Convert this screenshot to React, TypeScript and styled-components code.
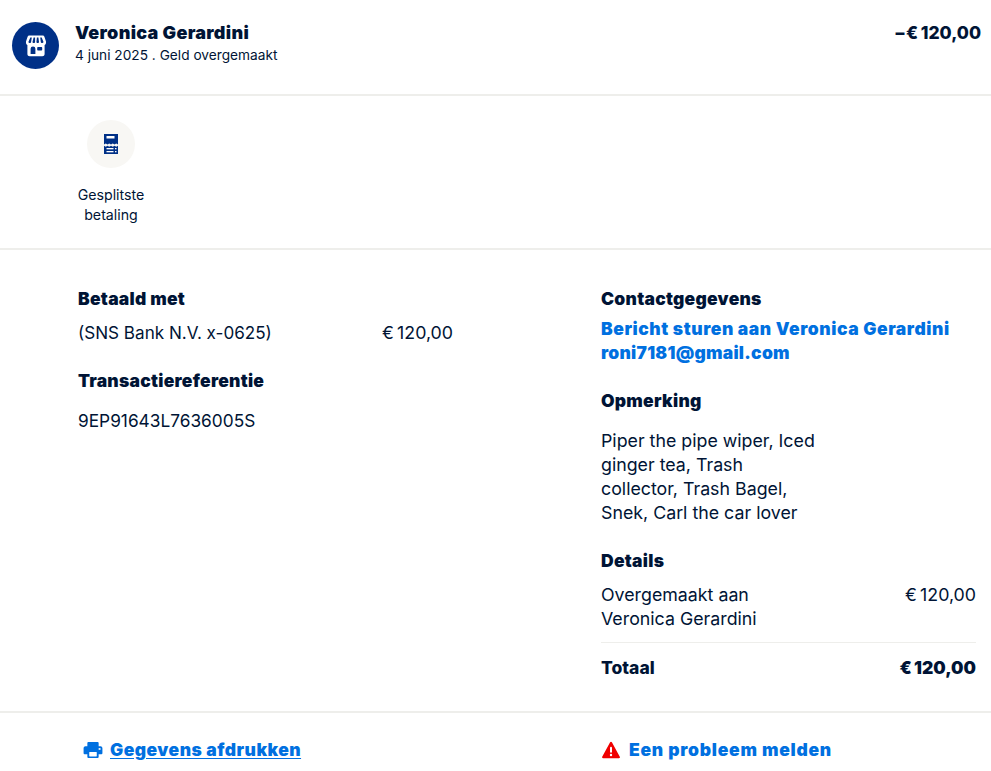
import React from "react";
import styled, { createGlobalStyle } from "styled-components";

const Global = createGlobalStyle`
  html, body { margin: 0; padding: 0; background: #fff; }
  body { font-family: Inter, "Liberation Sans", sans-serif; color: #001435; }
`;

const Page = styled.div`
  width: 991px;
  height: 771px;
  overflow: hidden;
`;

const Header = styled.header`
  height: 96px;
  box-sizing: border-box;
  padding: 21px 10px 0 12px;
  display: flex;
  align-items: flex-start;
  border-bottom: 2px solid #eeeeeb;
`;

const Avatar = styled.div`
  width: 47px;
  height: 47px;
  margin-top: 1px;
  border-radius: 50%;
  background: #003087;
  display: flex;
  align-items: center;
  justify-content: center;
  flex: none;
`;

const HeaderText = styled.div`
  margin-left: 16px;
  flex: 1;
`;

const Name = styled.div`
  font-size: 18px;
  line-height: 24px;
  font-weight: 900;
  letter-spacing: 0.3px;
`;

const Sub = styled.div`
  font-size: 13.7px;
  line-height: 18px;
  margin-top: 1px;
`;

const Amount = styled.div`
  font-size: 17.5px;
  line-height: 24px;
  font-weight: 800;
  letter-spacing: -0.75px;
`;

const Actions = styled.section`
  height: 154px;
  box-sizing: border-box;
  border-bottom: 2px solid #eeeeeb;
  padding: 24px 0 0 72px;
`;

const Action = styled.div`
  width: 78px;
  display: flex;
  flex-direction: column;
  align-items: center;
`;

const ActionCircle = styled.div`
  width: 48px;
  height: 48px;
  border-radius: 50%;
  background: #f8f7f4;
  display: flex;
  align-items: center;
  justify-content: center;
`;

const ActionLabel = styled.div`
  margin-top: 17px;
  font-size: 14.2px;
  line-height: 20px;
  text-align: center;
`;

const Main = styled.main`
  height: 463px;
  box-sizing: border-box;
  border-bottom: 2px solid #eeeeeb;
  padding: 37px 15px 0 78px;
  display: grid;
  grid-template-columns: 375px 375px;
  column-gap: 148px;
  align-content: start;
`;

const Column = styled.div`
  display: flex;
  flex-direction: column;
`;

const Heading = styled.h3<{ $top?: number }>`
  margin: ${(p) => p.$top ?? 0}px 0 0;
  font-size: 17.5px;
  line-height: 24px;
  font-weight: 900;
  letter-spacing: 0.25px;
`;

const Row = styled.div`
  display: flex;
  justify-content: space-between;
  align-items: flex-start;
`;

const Body = styled.div<{ $top?: number; $width?: number; $size?: number }>`
  margin-top: ${(p) => p.$top ?? 0}px;
  font-size: ${(p) => p.$size ?? 17.8}px;
  line-height: 24px;
  ${(p) => (p.$width ? `width: ${p.$width}px;` : "")}
`;

const ContactLink = styled.a<{ $spacing?: number }>`
  font-size: 17.5px;
  line-height: 24px;
  font-weight: 900;
  color: #0070e0;
  letter-spacing: ${(p) => p.$spacing ?? 0.25}px;
  text-decoration: none;
  display: block;
`;

const ContactLinks = styled.div`
  margin-top: 6px;
`;

const TotalRow = styled.div`
  margin-top: 11px;
  padding-top: 13px;
  border-top: 1px solid #eeeeeb;
  display: flex;
  justify-content: space-between;
  font-size: 17.5px;
  line-height: 24px;
  font-weight: 800;
`;

const TotalValue = styled.span`
  font-weight: 900;
  letter-spacing: -0.2px;
`;

const Footer = styled.footer`
  padding: 25px 15px 0 83px;
  display: grid;
  grid-template-columns: 370px 375px;
  column-gap: 148px;
`;

const FootLink = styled.a`
  display: inline-flex;
  align-items: center;
  gap: 7px;
  font-size: 17.5px;
  line-height: 24px;
  font-weight: 900;
  color: #0070e0;
  letter-spacing: 0.47px;
`;

const Underlined = styled.span`
  text-decoration: underline;
  text-underline-offset: 2px;
`;

const ReportLink = styled(FootLink)`
  gap: 9px;
  margin-left: 1px;
  letter-spacing: 0.75px;
`;

const StoreIcon = () => (
  <svg width="24" height="24" viewBox="0 0 24 24">
    <path fill="#fff" d="M5.500 1.500h13c.9 0 1.600.5 1.900 1.300L22 7.500v1.200c0 1-.6 1.900-1.400 2.300V20c0 1.300-1 2.300-2.300 2.300H5.700c-1.300 0-2.300-1-2.300-2.300v-9c-.8-.4-1.400-1.300-1.400-2.300V7.500l1.600-4.700c.3-.8 1-1.300 1.900-1.300Z" />
    <path fill="#003087" d="M6.300 3.500h1.500L7.100 8c-.1.800-.6 1.100-1.200 1.100-.7 0-1.300-.4-1.500-1ZM9.600 3.500h1.500v4.500c0 .7-.6 1.100-1.300 1.100s-1.300-.5-1.300-1.100ZM12.900 3.500h1.500l.6 4.500c0 .6-.6 1.100-1.300 1.100s-1.300-.4-1.300-1.100ZM16.200 3.500h1.500l1.800 4.600c-.2.600-.8 1-1.500 1-.6 0-1.100-.3-1.200-1.100Z" />
    <path fill="#003087" d="M6.600 20v-5.200a2.400 2.400 0 0 1 4.800 0V20ZM14.200 13h3c.6 0 1 .4 1 1v1.600c0 .6-.4 1-1 1h-3c-.6 0-1-.4-1-1V14c0-.6.400-1 1-1Z" />
  </svg>
);

const SplitIcon = () => (
  <svg width="16" height="22" viewBox="0 0 16 22">
    <path fill="#003087" d="M1 1h14v10.500l-1.750-1-1.750 1-1.750-1-1.750 1-1.750-1-1.750 1-1.750-1L1 11.500Z" />
    <rect x="3.500" y="3" width="8" height="2.500" fill="#fff" />
    <path fill="#003087" d="M1 12.800l1.750 1 1.750-1 1.750 1 1.750-1 1.750 1 1.750-1 1.750 1L15 12.800V21H1Z" />
    <rect x="3.500" y="15" width="7" height="1.300" fill="#fff" />
    <rect x="3.500" y="18" width="7" height="1.300" fill="#fff" />
    <rect x="12" y="15" width="1.500" height="1.300" fill="#fff" />
    <rect x="12" y="18" width="1.500" height="1.300" fill="#fff" />
  </svg>
);

const PrinterIcon = () => (
  <svg width="20" height="16" viewBox="0 0 20 17">
    <path fill="#0070e0" d="M5 0h10c.6 0 1 .4 1 1v3.500H4V1c0-.6.400-1 1-1ZM2 4.500h16c1.100 0 2 .9 2 2V12c0 .6-.4 1-1 1h-3v3c0 .6-.4 1-1 1H5c-.6 0-1-.4-1-1v-3H1c-.6 0-1-.4-1-1V6.500c0-1.100.9-2 2-2Z" />
    <rect x="6" y="10.500" width="8" height="4.800" rx=".5" fill="#fff" />
    <rect x="16" y="6.500" width="2" height="1.800" fill="#fff" />
  </svg>
);

const WarningIcon = () => (
  <svg width="18" height="18" viewBox="0 0 18 18">
    <path fill="#f00000" d="M8.100 1.300c.4-.7 1.400-.7 1.800 0l7.900 14.400c.4.700 0 1.500-.8 1.500H1c-.8 0-1.200-.8-.8-1.500Z" />
    <rect x="8" y="5.800" width="2" height="6" rx="1" fill="#fff" />
    <circle cx="9" cy="14" r="1.200" fill="#fff" />
  </svg>
);

const euro = "€\u202f120,00";

export default function App() {
  return (
    <Page>
      <Global />
      <Header>
        <Avatar><StoreIcon /></Avatar>
        <HeaderText>
          <Name>Veronica Gerardini</Name>
          <Sub>4 juni 2025 . Geld overgemaakt</Sub>
        </HeaderText>
        <Amount>−{euro}</Amount>
      </Header>
      <Actions>
        <Action>
          <ActionCircle><SplitIcon /></ActionCircle>
          <ActionLabel>Gesplitste<br />betaling</ActionLabel>
        </Action>
      </Actions>
      <Main>
        <Column>
          <Heading>Betaald met</Heading>
          <Row>
            <Body $top={10} $size={17.1}>(SNS Bank N.V. x-0625)</Body>
            <Body $top={10}>{euro}</Body>
          </Row>
          <Heading $top={24}>Transactiereferentie</Heading>
          <Body $top={16} $size={17.3}>9EP91643L7636005S</Body>
        </Column>
        <Column>
          <Heading>Contactgegevens</Heading>
          <ContactLinks>
            <ContactLink $spacing={0.55}>Bericht sturen aan Veronica Gerardini</ContactLink>
            <ContactLink>roni7181@gmail.com</ContactLink>
          </ContactLinks>
          <Heading $top={24}>Opmerking</Heading>
          <Body $top={16} $width={218}>Piper the pipe wiper, Iced ginger tea, Trash collector, Trash Bagel, Snek, Carl the car lover</Body>
          <Heading $top={24}>Details</Heading>
          <Row>
            <Body $top={10}>Overgemaakt aan<br />Veronica Gerardini</Body>
            <Body $top={10}>{euro}</Body>
          </Row>
          <TotalRow><span>Totaal</span><TotalValue>{euro}</TotalValue></TotalRow>
        </Column>
      </Main>
      <Footer>
        <div>
          <FootLink><PrinterIcon /><Underlined>Gegevens afdrukken</Underlined></FootLink>
        </div>
        <div>
          <ReportLink><WarningIcon />Een probleem melden</ReportLink>
        </div>
      </Footer>
    </Page>
  );
}
